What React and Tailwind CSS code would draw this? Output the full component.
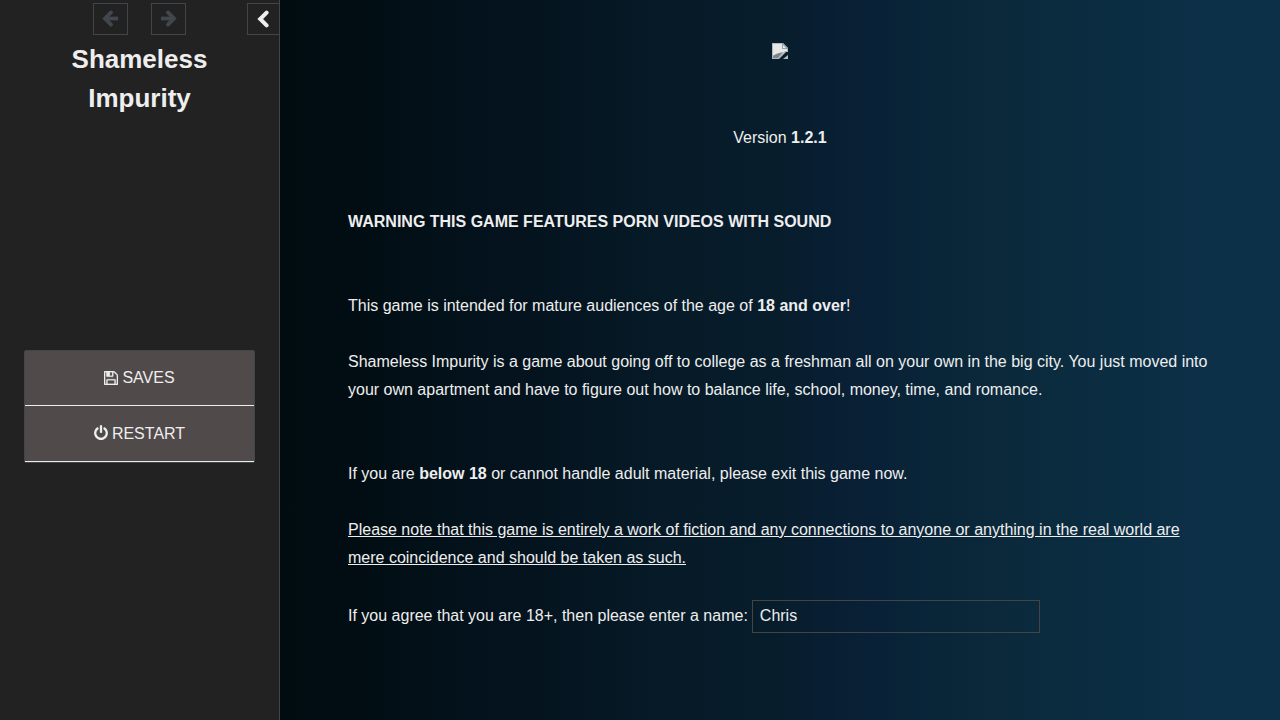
import { useState } from "react";

const ArrowIcon = ({ className }) => (
    <svg viewBox="0 0 17 17" className={className} fill="none" stroke="currentColor" strokeWidth="3.8" strokeLinecap="round" aria-hidden="true">
        <path d="M9 2.4 3 8.5l6 6.1" />
        <path d="M3.4 8.5H16" strokeLinecap="butt" />
    </svg>
);

const ChevronIcon = () => (
    <svg viewBox="0 0 12 18" className="w-3 h-[18px]" fill="none" stroke="currentColor" strokeWidth="4" strokeLinecap="round" aria-hidden="true">
        <path d="M9.6 2.6 3.2 9l6.4 6.4" />
    </svg>
);

const FloppyIcon = () => (
    <svg viewBox="0 0 1536 1536" className="size-3.5" fill="currentColor" stroke="currentColor" strokeWidth="30" aria-hidden="true">
        <path d="M384 1408h768v-384h-768v384zm896 0h128v-896q0-14-10-38.5t-20-34.5l-281-281q-10-10-34-20t-39-10v416q0 40-28 68t-68 28h-576q-40 0-68-28t-28-68v-416h-128v1280h128v-416q0-40 28-68t68-28h832q40 0 68 28t28 68v416zm-384-928v-320q0-13-9.5-22.5t-22.5-9.5h-192q-13 0-22.5 9.5t-9.5 22.5v320q0 13 9.5 22.5t22.5 9.5h192q13 0 22.5-9.5t9.5-22.5zm640 32v928q0 40-28 68t-68 28h-1344q-40 0-68-28t-28-68v-1344q0-40 28-68t68-28h928q40 0 88 20t76 48l280 280q28 28 48 76t20 88z" />
    </svg>
);

const PowerIcon = () => (
    <svg viewBox="128 0 1536 1664" className="w-3.5 h-[15px] mb-0.5" fill="currentColor" aria-hidden="true">
        <path d="M1664 896q0 156-61 298t-164 245-245 164-298 61-298-61-245-164-164-245-61-298q0-182 80.5-343t226.5-270q43-32 95.5-25t83.5 50q32 42 24.5 94.5t-49.5 84.5q-98 74-151.5 181t-53.5 228q0 104 40.5 198.5t109.5 163.5 163.5 109.5 198.5 40.5 198.5-40.5 163.5-109.5 109.5-163.5 40.5-198.5q0-121-53.5-228t-151.5-181q-42-32-49.5-84.5t24.5-94.5q31-43 84-50t95 25q146 109 226.5 270t80.5 343zm-640-768v640q0 52-38 90t-90 38-90-38-38-90v-640q0-52 38-90t90-38 90 38 38 90z" />
    </svg>
);

const BrokenImage = () => (
    <svg viewBox="0 0 16 16" className="size-4" role="img" aria-label="Logo">
        <path d="M0 0h11l5 5v4h-2L7 16H0z" fill="#b4b9bc" />
        <path d="M1 1h9v5h5v2h-2L8 12H1z" fill="#e6e8e8" />
        <path d="M1 15v-2l3-2 3-1 4-1-5 6z" fill="#7c868c" />
        <path d="M10 0h1l5 5v1h-6z" fill="#9aa1a5" />
        <path d="M11 2l3 3h-3z" fill="#eeeeee" />
        <path d="M16 12v4h-5z" fill="#b4b9bc" />
    </svg>
);

const menuItems = [
    { label: "SAVES", Icon: FloppyIcon },
    { label: "RESTART", Icon: PowerIcon },
];

const Sidebar = () => (
    <aside className="w-70 shrink-0 bg-[#222222] border-r border-[#444444] flex flex-col">
        <div className="grid grid-cols-[1fr_auto_1fr] pt-[3px]">
            <div></div>
            <div className="flex gap-[23px]">
                <button type="button" disabled aria-label="Go backward" className="w-[35px] h-8 border border-[#41464b] text-[#41474c] flex justify-center pt-1.5">
                    <ArrowIcon className="size-[17px]" />
                </button>
                <button type="button" disabled aria-label="Go forward" className="w-[35px] h-8 border border-[#41464b] text-[#41474c] flex justify-center pt-1.5">
                    <ArrowIcon className="size-[17px] -scale-x-100" />
                </button>
            </div>
            <button type="button" aria-label="Toggle the UI bar" className="justify-self-end w-8 h-8 border border-r-0 border-[#41464b] flex items-center justify-center pr-0.5 pb-px">
                <ChevronIcon />
            </button>
        </div>

        <h1 className="mt-[5px] px-6 text-center text-[26px] leading-[39px] font-bold">
            Shameless<br />Impurity
        </h1>

        <nav className="mt-58 mx-6 border border-[#41464b] rounded-xs bg-[#504a4a]">
            {menuItems.map(({ label, Icon }) => (
                <button key={label} type="button" className="w-full h-14 border-b border-[#eeeeee] flex items-center justify-center gap-1 first:h-[55px]">
                    <Icon />
                    <span>{label}</span>
                </button>
            ))}
        </nav>
    </aside>
);

const App = () => {
    const [name, setName] = useState("Chris");

    return (
        <div className="min-h-screen flex bg-[#111111] text-[#eeeeee] text-base font-['Liberation_Sans',Arial,sans-serif]">
            <Sidebar />

            <main className="flex-1 min-w-0 px-10 pt-10 pb-10 bg-[linear-gradient(to_right,#010c11_0%,#010d12_7%,#03111a_16%,#04131e_24%,#061a27_38%,#081d2c_50%,#081f34_56%,#092136_60%,#092639_66%,#0b293b_72%,#0b2d42_84%,#0c3048_93%,#0c3048_100%)]">
                <div className="max-w-[864px] mx-auto leading-7">
                    <div className="h-7 mb-14 pt-[3px] flex justify-center">
                        <BrokenImage />
                    </div>
                    <p className="mb-14 text-center">Version <b>1.2.1</b></p>
                    <p className="mb-14"><b>WARNING THIS GAME FEATURES PORN VIDEOS WITH SOUND</b></p>
                    <p className="mb-7">This game is intended for mature audiences of the age of <b>18 and over</b>!</p>
                    <p className="mb-14">
                        Shameless Impurity is a game about going off to college as a freshman all on your own in the big city. You just moved into your own apartment and have to figure out how to balance life, school, money, time, and romance.
                    </p>
                    <p className="mb-7">If you are <b>below 18</b> or cannot handle adult material, please exit this game now.</p>
                    <p className="mb-7 underline">
                        Please note that this game is entirely a work of fiction and any connections to anyone or anything in the real world are mere coincidence and should be taken as such.
                    </p>
                    <div className="flex flex-wrap items-baseline gap-x-1">
                        <label htmlFor="player-name">If you agree that you are 18+, then please enter a name:</label>
                        <input
                            id="player-name"
                            type="text"
                            value={name}
                            onChange={(e) => setName(e.target.value)}
                            className="w-72 h-[33px] px-[7px] pb-0.5 border border-[#444444] bg-transparent"
                        />
                    </div>
                </div>
            </main>
        </div>
    );
};

export default App;
